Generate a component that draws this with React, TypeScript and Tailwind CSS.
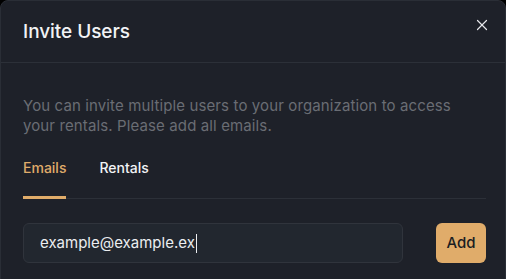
import React from 'react'
import { X } from 'lucide-react'

export default function App() {
  return (
    <div className="h-[279px] w-[506px] overflow-hidden bg-black font-['Inter',sans-serif]">
      <div className="h-[290px] w-[506px] rounded-t-lg border border-[#2a2e36] bg-[#1e2129]">
        {/* header */}
        <div className="flex h-[62px] items-center justify-between border-b border-[#2c3038] pl-[22px] pr-[14px]">
          <h2 className="mt-[2px] text-[19px] font-medium tracking-[-0.05px] text-[#f2f3f5]">Invite Users</h2>
          <button className="mb-[14px] text-[#e6e7ea]">
            <X className="h-[18px] w-[18px]" strokeWidth={1.6} />
          </button>
        </div>

        <div className="pl-[22px] pr-[19px] pt-[33px]">
          <p className="text-[15px] leading-[20px] tracking-[0.12px] text-[#6a6d74]">
            You can invite multiple users to your organization to access
            <br />
            your rentals. Please add all emails.
          </p>

          {/* tabs */}
          <div className="mt-[21px] flex gap-[33px] border-b border-[#2c3038] text-[14px] font-medium">
            <span className="-mb-px border-b-[3px] border-[#e0ac6a] pb-[18px] text-[#e0ac6a]">Emails</span>
            <span className="pb-[18px] text-[#f2f3f5]">Rentals</span>
          </div>

          {/* input row */}
          <div className="mt-[24px] flex items-center justify-between">
            <div className="flex h-[40px] w-[380px] items-center rounded-md border border-[#30343c] bg-[#22272f] pl-[16px]">
              <span className="text-[15px] text-[#eceef1]">example@example.ex</span>
              <span className="ml-px h-[19px] w-px bg-[#eceef1]" />
            </div>
            <button className="h-[40px] w-[50px] rounded-md bg-[#e0ac6a] text-[15px] font-medium text-[#1b1d22]">
              Add
            </button>
          </div>
        </div>
      </div>
    </div>
  )
}
